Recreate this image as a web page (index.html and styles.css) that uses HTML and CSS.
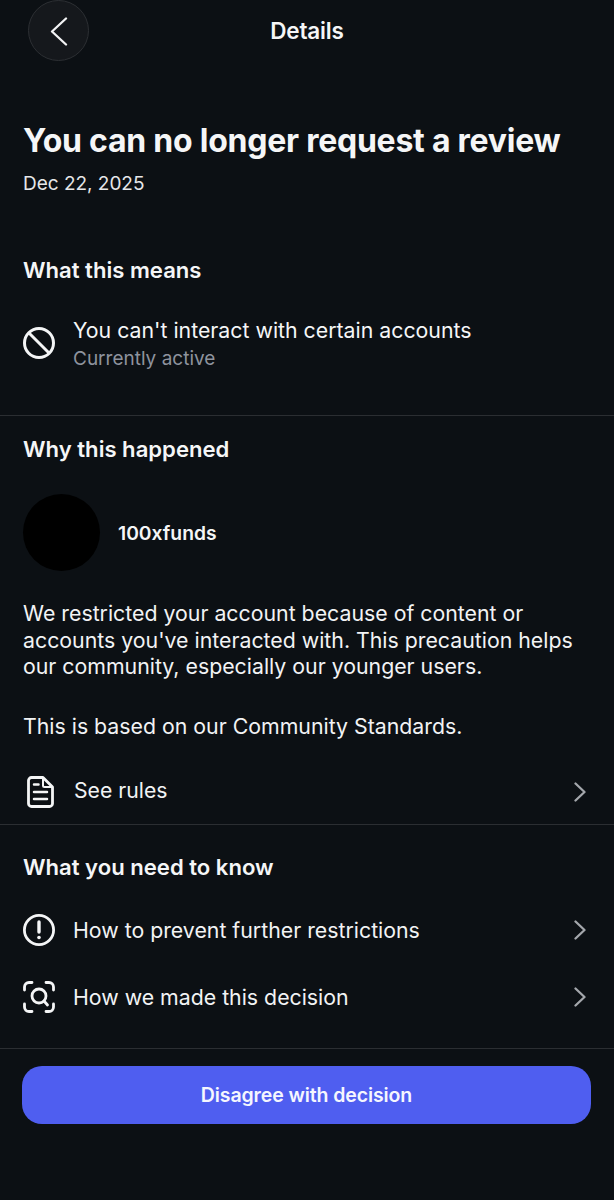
FILE: index.html
```html
<!DOCTYPE html>
<html lang="en">
<head>
<meta charset="utf-8">
<title>Details</title>
<link rel="stylesheet" href="styles.css">
</head>
<body>
<div class="page">
  <header class="topbar">
    <button class="back" aria-label="Back">
      <svg width="20" height="30" viewBox="0 0 20 30" fill="none"><path d="M17 2.500 3 15.500 17 28.500" stroke="#f2f3f4" stroke-width="2.300" stroke-linecap="round" stroke-linejoin="round"/></svg>
    </button>
    <div class="topbar-title">Details</div>
  </header>

  <section class="intro">
    <h1 class="title">You can no longer request a review</h1>
    <div class="date">Dec 22, 2025</div>
  </section>

  <section class="means">
    <h2 class="heading">What this means</h2>
    <div class="status">
      <svg class="icon status-icon" width="34" height="34" viewBox="0 0 34 34" fill="none" stroke="#f4f5f6" stroke-width="3"><circle cx="17" cy="17" r="14.500"/><path d="M7 7l20 20"/></svg>
      <div class="status-text">
        <div class="status-main">You can't interact with certain accounts</div>
        <div class="status-sub">Currently active</div>
      </div>
    </div>
  </section>

  <section class="why">
    <h2 class="heading">Why this happened</h2>
    <div class="account">
      <div class="avatar"></div>
      <div class="account-name">100xfunds</div>
    </div>
    <p class="para">We restricted your account because of content or accounts you've interacted with. This precaution helps our community, especially our younger users.</p>
    <p class="para para-second">This is based on our Community Standards.</p>
    <div class="rules-row">
      <svg class="icon" width="34" height="34" viewBox="0 0 34 34" fill="none" stroke="#f4f5f6" stroke-width="2.800" stroke-linecap="round" stroke-linejoin="round"><path d="M8.500 2.500h11.500l9.500 9.500v16.500a3 3 0 0 1-3 3h-18a3 3 0 0 1-3-3v-23a3 3 0 0 1 3-3z"/><path d="M20 3v7.500a1.500 1.500 0 0 0 1.500 1.500h7.500" stroke-width="2"/><path d="M11 9.500h4.500M11 17h13M11 24h13" stroke-width="2.500"/></svg>
      <span class="row-label">See rules</span>
      <svg class="chev" width="12" height="20" viewBox="0 0 12 20" fill="none"><path d="M1.500 1.500 10.500 10 1.500 18.500" stroke="#a4a7ac" stroke-width="2.300" stroke-linecap="round" stroke-linejoin="round"/></svg>
    </div>
  </section>

  <section class="know">
    <h2 class="heading">What you need to know</h2>
    <div class="know-row">
      <svg class="icon" width="34" height="34" viewBox="0 0 34 34" fill="none" stroke="#f4f5f6" stroke-width="2.800"><circle cx="17" cy="17" r="14.600"/><path d="M17 9v10" stroke-width="3.400" stroke-linecap="round"/><circle cx="17" cy="24.500" r="1.800" fill="#f4f5f6" stroke="none"/></svg>
      <span class="row-label">How to prevent further restrictions</span>
      <svg class="chev" width="12" height="20" viewBox="0 0 12 20" fill="none"><path d="M1.500 1.500 10.500 10 1.500 18.500" stroke="#a4a7ac" stroke-width="2.300" stroke-linecap="round" stroke-linejoin="round"/></svg>
    </div>
    <div class="know-row">
      <svg class="icon" width="34" height="34" viewBox="0 0 34 34" fill="none" stroke="#f4f5f6" stroke-width="2.800" stroke-linecap="round" stroke-linejoin="round"><path d="M2.500 10V7A4.500 4.500 0 0 1 7 2.500h3M24 2.500h3A4.500 4.500 0 0 1 31.500 7v3M31.500 24v3a4.500 4.500 0 0 1-4.500 4.500h-3M10 31.500H7A4.500 4.500 0 0 1 2.500 27v-3"/><circle cx="17" cy="16" r="7"/><path d="M22 21l3.500 4"/></svg>
      <span class="row-label">How we made this decision</span>
      <svg class="chev" width="12" height="20" viewBox="0 0 12 20" fill="none"><path d="M1.500 1.500 10.500 10 1.500 18.500" stroke="#a4a7ac" stroke-width="2.300" stroke-linecap="round" stroke-linejoin="round"/></svg>
    </div>
  </section>

  <footer class="actions">
    <button class="primary">Disagree with decision</button>
  </footer>
</div>
</body>
</html>
```

FILE: styles.css
```css
* { box-sizing: border-box; }
html, body { margin: 0; padding: 0; }
body {
  background: #0c1014;
  color: #f5f6f7;
  font-family: Inter, "Liberation Sans", sans-serif;
}
.page { width: 614px; height: 1200px; overflow: hidden; display: flex; flex-direction: column; }

.topbar { height: 62px; position: relative; display: flex; align-items: center; justify-content: center; }
.topbar-title { font-size: 22.500px; font-weight: 600; letter-spacing: -0.15px; margin-top: -2px; }
.back {
  position: absolute; left: 28px; top: 0;
  width: 61px; height: 61px; border-radius: 50%;
  background: #15181c; border: 1px solid #2c2f33;
  display: flex; align-items: center; justify-content: center; padding: 0;
}

.intro { padding: 60px 23px 0; height: 140px; }
.title { margin: 0; font-size: 32px; line-height: 38px; font-weight: 700; letter-spacing: -0.24px; white-space: nowrap; }
.date { margin-top: 12px; font-size: 19px; line-height: 24px; color: #e6e7e9; font-weight: 400; letter-spacing: -0.02px; }

.heading { margin: 0; font-size: 22.100px; line-height: 28px; font-weight: 600; }

.means { padding: 54px 23px 0; height: 214px; border-bottom: 1px solid #2b2e32; }
.status { display: flex; align-items: center; gap: 17px; margin-top: 32px; margin-left: -1px; }
.status-main { font-size: 21.300px; line-height: 28px; color: #f5f6f7; }
.status-sub { font-size: 19px; line-height: 26px; color: #8e939e; margin-top: 2px; }
.icon { flex: none; }
.status-icon { margin-top: -2px; }

.why { padding: 19px 0 0; height: 409px; border-bottom: 1px solid #2b2e32; }
.why .heading, .why .account, .why .para { margin-left: 23px; margin-right: 20px; }
.account { display: flex; align-items: center; gap: 18px; margin-top: 31px; }
.avatar { width: 77px; height: 77px; border-radius: 50%; background: #000; }
.account-name { font-size: 19.300px; font-weight: 600; }
.para { margin: 0; font-size: 21.300px; line-height: 26.500px; color: #f2f3f4; }
.why .para { margin-top: 29px; }
.why .para-second { margin-top: 33px; }
.rules-row { display: flex; align-items: center; margin-top: 36px; padding: 0 28px 0 23px; height: 34px; }
.row-label { font-size: 21.300px; line-height: 28px; margin-left: 17px; flex: 1; color: #f2f3f4; }
.rules-row .row-label { font-size: 21.200px; margin-bottom: 4px; }
.chev { flex: none; }

.know { padding: 28px 0 0; height: 224px; border-bottom: 1px solid #2b2e32; }
.know .heading { margin: 0 23px 32px; }
.know-row { display: flex; align-items: center; height: 34px; margin-bottom: 33px; padding: 0 28px 0 22px; }

.actions { padding: 17px 22px 0 22px; }
.primary {
  width: 569px; height: 58px; border: 0; border-radius: 20px;
  background: #4f5ef0; color: #f5f6fe;
  font-family: inherit; font-size: 19.500px; font-weight: 600; letter-spacing: -0.1px;
}
```
